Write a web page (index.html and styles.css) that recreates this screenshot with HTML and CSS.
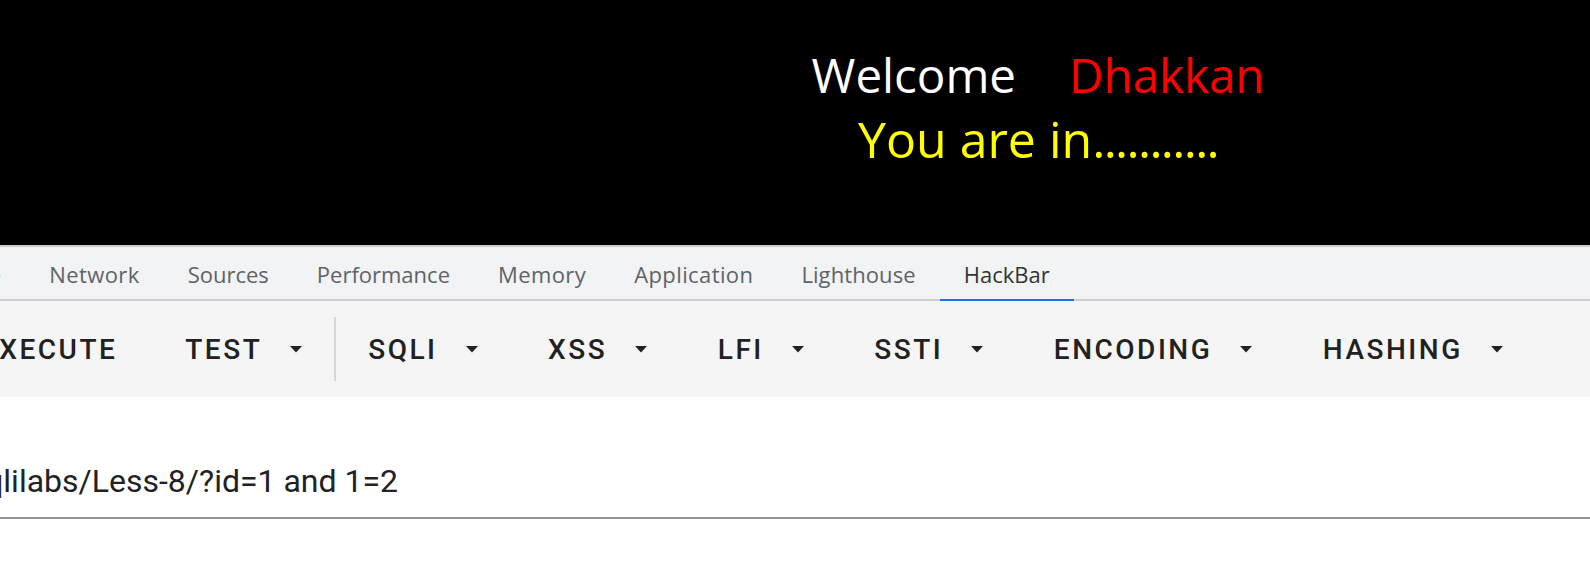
FILE: index.html
```html
<!DOCTYPE html>
<html lang="en">
<head>
<meta charset="utf-8">
<title>Less-8 HackBar</title>
<link rel="stylesheet" href="styles.css">
</head>
<body>
<header class="site">
  <div class="welcome">Welcome<span class="name">Dhakkan</span></div>
  <div class="youin">You are in<span class="dots">...........</span></div>
</header>
<section class="devtools">
  <nav class="tabs">
    <div class="tab-row">
      <span class="tab">Console</span>
      <span class="tab tab-wide">Network</span>
      <span class="tab">Sources</span>
      <span class="tab">Performance</span>
      <span class="tab tab-wide">Memory</span>
      <span class="tab tab-wide">Application</span>
      <span class="tab tab-mid">Lighthouse</span>
      <span class="tab active">HackBar</span>
    </div>
  </nav>
  <div class="toolbar">
    <div class="tb-row">
      <span class="btn btn-plain">Execute</span>
      <span class="btn btn-last">Test<svg class="caret" width="12" height="7" viewBox="0 0 12 7"><path d="M0 0H12L6 6.5Z"/></svg></span>
      <span class="divider"></span>
      <span class="btn">SQLi<svg class="caret" width="12" height="7" viewBox="0 0 12 7"><path d="M0 0H12L6 6.5Z"/></svg></span>
      <span class="btn">XSS<svg class="caret" width="12" height="7" viewBox="0 0 12 7"><path d="M0 0H12L6 6.5Z"/></svg></span>
      <span class="btn">LFI<svg class="caret" width="12" height="7" viewBox="0 0 12 7"><path d="M0 0H12L6 6.5Z"/></svg></span>
      <span class="btn">SSTI<svg class="caret" width="12" height="7" viewBox="0 0 12 7"><path d="M0 0H12L6 6.5Z"/></svg></span>
      <span class="btn">Encoding<svg class="caret" width="12" height="7" viewBox="0 0 12 7"><path d="M0 0H12L6 6.5Z"/></svg></span>
      <span class="btn">Hashing<svg class="caret" width="12" height="7" viewBox="0 0 12 7"><path d="M0 0H12L6 6.5Z"/></svg></span>
    </div>
  </div>
  <div class="editor">
    <div class="field">
      <div class="url">http://127.0.0.1/sqlilabs/Less-8/?id=1 and 1=2</div>
    </div>
  </div>
</section>
</body>
</html>
```
FILE: styles.css
```css
* {
  box-sizing: border-box;
  margin: 0;
  padding: 0;
}

html,
body {
  width: 1590px;
  height: 570px;
  overflow: hidden;
  background: #ffffff;
}

.site {
  height: 245px;
  background: #000000;
  padding: 43px 0 0 486px;
  display: flex;
  flex-direction: column;
  align-items: center;
  font-family: "Open Sans", sans-serif;
}

.welcome {
  font-size: 47.5px;
  line-height: 64px;
  color: #ffffff;
  white-space: nowrap;
}

.welcome .name {
  color: #ff0000;
  margin-left: 53px;
}

.youin {
  font-size: 50px;
  line-height: 64px;
  color: #ffff00;
  white-space: nowrap;
}

.dots {
  letter-spacing: -1.7px;
}

.devtools {
  overflow: hidden;
}

.tabs {
  height: 56px;
  border-top: 2px solid #cbcdd1;
  border-bottom: 2px solid #cbcdd1;
  background: #f1f3f4;
}

.tab-row {
  display: flex;
  height: 52px;
  margin-left: -105px;
}

.tab {
  position: relative;
  flex: none;
  padding: 2px 24px 0;
  line-height: 50px;
  font-family: "Open Sans", sans-serif;
  font-size: 22px;
  color: #5f6368;
  white-space: nowrap;
}

.tab-wide {
  letter-spacing: 0.4px;
}

.tab-mid {
  letter-spacing: 0.1px;
}

.tab.active {
  color: #333333;
}

.tab.active::after {
  content: "";
  position: absolute;
  left: 0;
  right: 0;
  bottom: -2px;
  height: 2px;
  background: #1a73e8;
}

.toolbar {
  height: 96px;
  background: #f5f5f5;
  display: flex;
  align-items: center;
  overflow: hidden;
}

.tb-row {
  display: flex;
  align-items: center;
  margin-left: -51px;
}

.btn {
  flex: none;
  display: flex;
  align-items: center;
  height: 72px;
  padding: 0 38.6px 0 32px;
  font-family: Roboto, sans-serif;
  font-weight: 500;
  font-size: 28px;
  letter-spacing: 2.5px;
  text-transform: uppercase;
  color: #212121;
  white-space: nowrap;
}

.btn-plain {
  padding-right: 36px;
}

.btn-last {
  padding-right: 32px;
}

.caret {
  margin-left: 28px;
  fill: #212121;
}

.divider {
  flex: none;
  width: 2px;
  height: 64px;
  background: #d6d6d6;
}

.editor {
  padding-top: 64px;
  overflow: hidden;
}

.field {
  padding-bottom: 16px;
  border-bottom: 2px solid #949494;
}

.url {
  margin-left: -265px;
  font-family: Roboto, sans-serif;
  font-size: 32px;
  line-height: 40px;
  color: #222222;
  white-space: nowrap;
}
```
